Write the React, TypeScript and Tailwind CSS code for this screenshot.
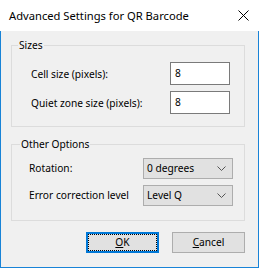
import React from "react";

const font = { fontFamily: '"Noto Sans", "Segoe UI", sans-serif' };

function Chevron() {
  return (
    <svg width="9" height="5" viewBox="0 0 9 5" className="shrink-0">
      <polyline points="0.5,0.5 4.5,4.5 8.5,0.5" fill="none" stroke="#555" strokeWidth="1" />
    </svg>
  );
}

function Select({ value }: { value: string }) {
  return (
    <div className="w-[90px] h-[21px] bg-[#e1e1e1] border border-[#adadad] flex items-center justify-between pl-[3px] pr-[6px]">
      <span className="leading-none">{value}</span>
      <Chevron />
    </div>
  );
}

function Input({ value }: { value: string }) {
  return (
    <div className="w-[60px] h-[23px] bg-white border border-[#7a7a7a] flex items-center pl-[4px]">
      <span className="leading-none">{value}</span>
    </div>
  );
}

export default function App() {
  return (
    <div className="w-[259px] h-[268px] flex flex-col text-[10.2px] text-black select-none whitespace-nowrap" style={font}>
      <div className="h-[31px] bg-white flex items-center justify-between pl-[9px] pr-[10px]">
        <span className="leading-none text-[11.2px]">Advanced Settings for QR Barcode</span>
        <svg width="11" height="11" viewBox="0 0 11 11">
          <path d="M0.5 0.5 L10.5 10.5 M10.5 0.5 L0.5 10.5" stroke="#000" strokeWidth="1" />
        </svg>
      </div>
      <div className="flex-1 bg-[#f0f0f0] border-l border-r border-b border-[#1883d7] flex flex-col pl-[10px] pr-[13px] pt-[14px]">
        <div className="relative border border-[#dcdcdc] pt-[16px] pb-[12px] pl-[19px] pr-[14px] flex flex-col gap-[6px]">
          <span className="absolute -top-[9px] left-[6px] bg-[#f0f0f0] px-[1px] leading-[16px]">Sizes</span>
          <div className="flex items-center justify-between">
            <span className="pt-[2px]">Cell size (pixels):</span>
            <Input value="8" />
          </div>
          <div className="flex items-center justify-between">
            <span className="pt-[2px]">Quiet zone size (pixels):</span>
            <Input value="8" />
          </div>
        </div>
        <div className="relative mt-[17px] border border-[#dcdcdc] pt-[13px] pb-[14px] pl-[17px] pr-[11px] flex flex-col gap-[6px]">
          <span className="absolute -top-[9px] left-[8px] bg-[#f0f0f0] px-[1px] leading-[16px]">Other Options</span>
          <div className="flex items-center justify-between">
            <span>Rotation:</span>
            <Select value="0 degrees" />
          </div>
          <div className="flex items-center justify-between">
            <span>Error correction level</span>
            <Select value="Level Q" />
          </div>
        </div>
        <div className="mt-[11px] flex justify-end gap-[13px]">
          <div className="w-[73px] h-[21px] border-2 border-[#0078d7] bg-[#e1e1e1] p-0">
            <div className="w-full h-full border border-dotted border-black flex items-center justify-center">
              <span className="leading-none"><span className="underline">O</span>K</span>
            </div>
          </div>
          <div className="w-[73px] h-[21px] border border-[#adadad] bg-[#e1e1e1] flex items-center justify-center">
            <span className="leading-none"><span className="underline">C</span>ancel</span>
          </div>
        </div>
      </div>
    </div>
  );
}
